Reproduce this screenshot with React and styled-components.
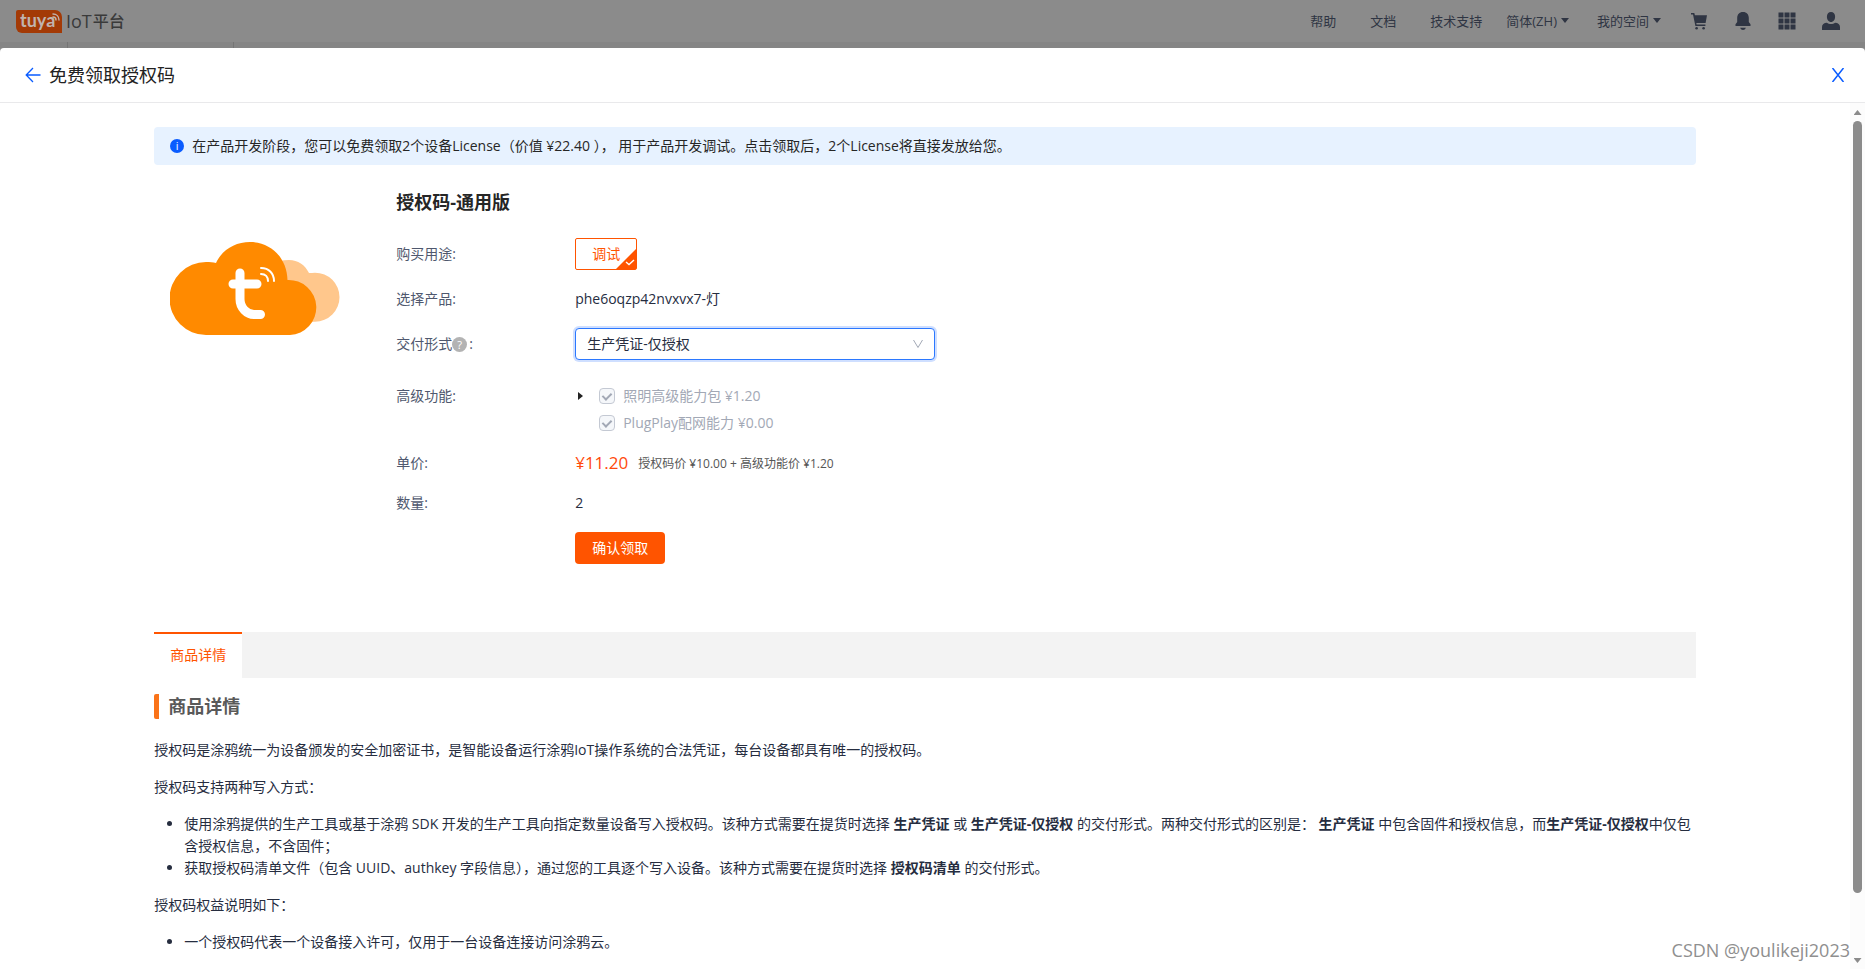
import React, { useState } from "react";
import styled, { createGlobalStyle, css } from "styled-components";

const GlobalStyle = createGlobalStyle`
  * {
    box-sizing: border-box;
  }
  html,
  body,
  #root {
    height: 100%;
  }
  body {
    margin: 0;
    overflow: hidden;
    background: #8b8b8b;
    color: #262d3f;
    font-family: "Open Sans", "Noto Sans CJK SC", sans-serif;
    font-size: 14px;
    line-height: 22px;
  }
  button,
  select,
  input {
    font: inherit;
  }
`;

const navLinks = ["帮助", "文档", "技术支持"];
const navMenus = ["简体(ZH)", "我的空间"];

const features = [
  { id: "light", name: "照明高级能力包", price: "¥1.20", expandable: true },
  { id: "plug", name: "PlugPlay配网能力", price: "¥0.00" },
];

const deliveryTypes = ["生产凭证-仅授权", "生产凭证", "授权码清单"];

function BrandLogo() {
  return (
    <Brand href="#home">
      <BrandMark>
        tuya
        <svg width="8" height="8" viewBox="0 0 8 8" fill="none" stroke="currentColor" strokeLinecap="round">
          <path strokeWidth="1.4" d="M1 1c3.5 0 6 2.5 6 6" />
          <path strokeWidth="1.4" d="M1 4c1.8 0 3 1.2 3 3" />
        </svg>
      </BrandMark>
      <BrandName>
        <span>IoT</span>平台
      </BrandName>
    </Brand>
  );
}

function TopIcons() {
  return (
    <IconGroup>
      <IconButton aria-label="购物车">
        <svg width="18" height="18" viewBox="0 0 18 18" fill="currentColor">
          <path d="M1 1h3.3l.6 2.3H17l-1.4 7.8H6.3l.3 1.4h8.8V14H5.4L3 2.5H1z" />
          <circle cx="6.6" cy="16.2" r="1.3" />
          <circle cx="13.6" cy="16.2" r="1.3" />
        </svg>
      </IconButton>
      <IconButton aria-label="消息">
        <svg width="18" height="18" viewBox="0 0 18 18" fill="currentColor">
          <path d="M9 0c3.8 0 5.8 2.6 5.8 6v4l1.7 2.2V14h-15v-1.800L3.200 10V6C3.200 2.600 5.200 0 9 0z" />
          <path d="M6.200 15.800h5.600C11.300 17.300 10.300 18 9 18s-2.300-.7-2.800-2.200z" />
        </svg>
      </IconButton>
      <IconButton aria-label="应用">
        <svg width="18" height="18" viewBox="0 0 18 18" fill="currentColor">
          {[0, 6, 12].map((y) =>
            [0, 6, 12].map((x) => <rect key={`${x}-${y}`} x={x + 0.5} y={y + 0.5} width="5" height="5" />)
          )}
        </svg>
      </IconButton>
      <IconButton aria-label="账号">
        <svg width="18" height="18" viewBox="0 0 18 18" fill="currentColor">
          <path d="M9 0c2.500 0 4.100 1.900 4.100 4.700S11.400 10 9 10 4.900 7.500 4.900 4.700 6.500 0 9 0z" />
          <path d="M0 18v-3c0-2.600 2-4.300 4.900-4.300 1 .8 2.500 1.300 4.100 1.300s3.100-.5 4.100-1.300c2.900 0 4.900 1.700 4.900 4.300v3z" />
        </svg>
      </IconButton>
    </IconGroup>
  );
}

function CloudImage() {
  return (
    <svg width="170" height="93" viewBox="0 0 170 93" role="img" aria-label="授权码">
      <path
        fill="#ffc78c"
        d="M100 80V22c6-3 13-4 19-4 9 0 16 5 20 13 2 0 4-.3 6-.3a24.500 24.500 0 1 1 0 49z"
      />
      <path
        fill="#ff8a00"
        d="M36 93a36.500 36.500 0 0 1 0-73c4 0 7 .2 10 1C52 8 65 0 80 0c21 0 37 16 37.500 38A27.500 27.500 0 1 1 120 93z"
      />
      <g fill="none" stroke="#fff" strokeLinecap="round">
        <path strokeWidth="9" d="M70 31v26c0 9 7 15.500 14 15.500h6.500M63 42h24" />
        <path strokeWidth="2" d="M91 26c8 0 13 5.500 13 13M91 32c4.500 0 7 3 7 7" />
      </g>
    </svg>
  );
}

export default function App() {
  const [delivery, setDelivery] = useState(deliveryTypes[0]);

  return (
    <Page>
      <GlobalStyle />
      <TopBar>
        <BrandLogo />
        <Nav>
          {navLinks.map((item) => (
            <NavLink key={item} href="#nav">
              {item}
            </NavLink>
          ))}
          {navMenus.map((item) => (
            <NavMenu key={item}>
              {item}
              <Caret />
            </NavMenu>
          ))}
          <TopIcons />
        </Nav>
      </TopBar>
      <Backdrop>
        <SideTab />
        <SubTab />
      </Backdrop>

      <Modal role="dialog" aria-labelledby="modal-title">
        <ModalHeader>
          <BackButton aria-label="返回">
            <svg width="16" height="16" viewBox="0 0 16 16" fill="none" stroke="currentColor" strokeWidth="1.3">
              <path d="M15.5 8H1.5M8 1 1.2 8 8 15" />
            </svg>
          </BackButton>
          <ModalTitle id="modal-title">免费领取授权码</ModalTitle>
          <CloseButton aria-label="关闭">
            <svg width="14" height="14" viewBox="0 0 14 14" fill="none" stroke="currentColor" strokeWidth="1.5">
              <path d="M1.500 0l11 14M12.500 0l-11 14" />
            </svg>
          </CloseButton>
        </ModalHeader>

        <ModalBody>
          <ScrollArea>
            <Content>
              <Notice>
                <InfoIcon>i</InfoIcon>
                在产品开发阶段，您可以免费领取2个设备License（价值 ¥22.40 ）， 用于产品开发调试。点击领取后，2个License将直接发放给您。
              </Notice>

              <Product>
                <ProductImage>
                  <CloudImage />
                </ProductImage>
                <ProductInfo>
                  <ProductName>授权码-通用版</ProductName>
                  <Field $height={32} $gap={18}>
                    <Label>购买用途:</Label>
                    <Tag aria-pressed="true">
                      调试
                      <TagCheck width="20" height="20" viewBox="0 0 20 20">
                        <path d="M20 0v20H0z" fill="#ff5400" />
                        <path d="M10 13l3 2.500 5-4.500" fill="none" stroke="#fff" strokeWidth="1.4" />
                      </TagCheck>
                    </Tag>
                  </Field>
                  <Field $height={22} $gap={18}>
                    <Label>选择产品:</Label>
                    <span>phe6oqzp42nvxvx7-灯</span>
                  </Field>
                  <Field $height={32} $gap={25}>
                    <Label as="label" htmlFor="delivery">
                      交付形式<HelpIcon>?</HelpIcon>:
                    </Label>
                    <SelectBox>
                      <Select id="delivery" value={delivery} onChange={(e) => setDelivery(e.target.value)}>
                        {deliveryTypes.map((type) => (
                          <option key={type}>{type}</option>
                        ))}
                      </Select>
                      <svg width="10" height="10" viewBox="0 0 10 10" fill="none" stroke="#a2a8b5">
                        <path d="M0.5 1L5 8.500 9.500 1" />
                      </svg>
                    </SelectBox>
                  </Field>
                  <Field $gap={17}>
                    <Label>高级功能:</Label>
                    <FeatureList>
                      {features.map((feature) => (
                        <Feature key={feature.id}>
                          <Toggle $visible={feature.expandable} aria-label="展开" />
                          <Checkbox type="checkbox" id={feature.id} defaultChecked disabled />
                          <label htmlFor={feature.id}>
                            {feature.name} {feature.price}
                          </label>
                        </Feature>
                      ))}
                    </FeatureList>
                  </Field>
                  <Field $height={22} $gap={17}>
                    <Label>单价:</Label>
                    <Price>¥11.20</Price>
                    <PriceNote>授权码价 ¥10.00 + 高级功能价 ¥1.20</PriceNote>
                  </Field>
                  <Field $height={22} $gap={18}>
                    <Label>数量:</Label>
                    <span>2</span>
                  </Field>
                  <Field $height={32}>
                    <Label />
                    <Submit>确认领取</Submit>
                  </Field>
                </ProductInfo>
              </Product>

              <Tabs role="tablist">
                <Tab role="tab" aria-selected="true">
                  商品详情
                </Tab>
              </Tabs>

              <Details>
                <DetailsTitle>商品详情</DetailsTitle>
                <p>授权码是涂鸦统一为设备颁发的安全加密证书，是智能设备运行涂鸦IoT操作系统的合法凭证，每台设备都具有唯一的授权码。</p>
                <p>授权码支持两种写入方式：</p>
                <ul>
                  <li>
                    使用涂鸦提供的生产工具或基于涂鸦 SDK 开发的生产工具向指定数量设备写入授权码。该种方式需要在提货时选择{" "}
                    <b>生产凭证</b> 或 <b>生产凭证-仅授权</b> 的交付形式。两种交付形式的区别是： <b>生产凭证</b>{" "}
                    中包含固件和授权信息，而<b>生产凭证-仅授权</b>中仅包含授权信息，不含固件；
                  </li>
                  <li>
                    获取授权码清单文件（包含 UUID、authkey 字段信息），通过您的工具逐个写入设备。该种方式需要在提货时选择{" "}
                    <b>授权码清单</b> 的交付形式。
                  </li>
                </ul>
                <p>授权码权益说明如下：</p>
                <ul>
                  <li>一个授权码代表一个设备接入许可，仅用于一台设备连接访问涂鸦云。</li>
                </ul>
              </Details>
            </Content>
          </ScrollArea>
          <Scrollbar aria-hidden="true">
            <ScrollArrow $up />
            <ScrollTrack>
              <ScrollThumb />
            </ScrollTrack>
            <ScrollArrow />
          </Scrollbar>
        </ModalBody>
      </Modal>
      <Watermark>CSDN @youlikeji2023</Watermark>
    </Page>
  );
}

const Page = styled.div`
  position: relative;
  display: flex;
  flex-direction: column;
  height: 100vh;
  overflow: hidden;
`;

const TopBar = styled.header`
  display: flex;
  justify-content: space-between;
  align-items: center;
  flex: none;
  height: 42px;
  padding: 0 25px 0 16px;
  background: #8b8b8b;
`;

const Brand = styled.a`
  display: flex;
  align-items: center;
  gap: 4px;
  color: #3a3a3a;
  text-decoration: none;
`;

const BrandMark = styled.span`
  position: relative;
  width: 46px;
  height: 23px;
  padding-left: 4px;
  border-radius: 2px 7px 0 6px;
  background: #a33a06;
  color: #c0b4ae;
  font-family: Lato, sans-serif;
  font-size: 18px;
  font-weight: 700;
  line-height: 20px;
  svg {
    position: absolute;
    top: 3px;
    right: 2px;
  }
`;

const BrandName = styled.span`
  display: flex;
  align-items: center;
  gap: 1px;
  font-size: 16px;
  font-weight: 500;
  span {
    font-size: 18px;
  }
`;

const Nav = styled.nav`
  display: flex;
  align-items: center;
  color: #2f3543;
  font-size: 13px;
`;

const NavLink = styled.a`
  margin-right: 34px;
  color: inherit;
  text-decoration: none;
  &:nth-of-type(3) {
    margin-right: 24px;
  }
`;

const NavMenu = styled.button`
  display: flex;
  align-items: center;
  gap: 4px;
  margin-right: 28px;
  padding: 0;
  border: 0;
  background: none;
  color: inherit;
`;

const Caret = styled.i`
  margin-bottom: 2px;
  border: 4px solid transparent;
  border-top: 5px solid currentColor;
  border-bottom: 0;
`;

const IconGroup = styled.div`
  display: flex;
  gap: 26px;
  margin-left: 1px;
`;

const IconButton = styled.button`
  display: flex;
  padding: 0;
  border: 0;
  background: none;
  color: #2f3543;
`;

const Backdrop = styled.div`
  display: flex;
  flex: none;
  height: 6px;
  background: #858585;
`;

const SideTab = styled.div`
  width: 68px;
  border-right: 1px solid #757575;
`;

const SubTab = styled.div`
  width: 166px;
  border-right: 1px solid #757575;
`;

const Modal = styled.section`
  display: flex;
  flex-direction: column;
  flex: 1;
  min-height: 0;
  border-radius: 4px 4px 0 0;
  background: #fff;
`;

const ModalHeader = styled.header`
  display: flex;
  align-items: center;
  flex: none;
  height: 55px;
  padding: 0 20px 0 25px;
  border-bottom: 1px solid #e9e9eb;
`;

const plainButton = css`
  display: flex;
  padding: 0;
  border: 0;
  background: none;
  color: #0a5cff;
`;

const BackButton = styled.button`
  ${plainButton}
`;

const CloseButton = styled.button`
  ${plainButton}
  margin-left: auto;
`;

const ModalTitle = styled.h1`
  margin: 0 0 0 8px;
  color: #222;
  font-size: 18px;
  font-weight: 400;
`;

const ModalBody = styled.div`
  display: flex;
  flex: 1;
  min-height: 0;
`;

const ScrollArea = styled.div`
  flex: 1;
  min-width: 0;
  overflow: hidden;
`;

const Content = styled.main`
  width: calc(100% * 10 / 12);
  margin: 0 auto;
  padding-top: 24px;
`;

const Notice = styled.div`
  display: flex;
  align-items: center;
  gap: 8px;
  padding: 8px 16px;
  border-radius: 4px;
  background: #e7f2ff;
  color: #262626;
`;

const InfoIcon = styled.i`
  width: 14px;
  height: 14px;
  border-radius: 50%;
  background: #0a5cff;
  color: #fff;
  font-size: 11px;
  font-style: normal;
  line-height: 14px;
  text-align: center;
`;

const Product = styled.section`
  display: flex;
`;

const ProductImage = styled.div`
  flex: none;
  width: 242px;
  padding: 77px 0 0 16px;
`;

const ProductInfo = styled.div`
  flex: 1;
  padding: 25px 0 68px;
`;

const ProductName = styled.h2`
  margin: 0 0 24px;
  color: #262626;
  font-size: 18px;
  font-weight: 700;
  line-height: 24px;
`;

const Field = styled.div`
  display: flex;
  align-items: ${(props) => (props.$height ? "center" : "flex-start")};
  min-height: ${(props) => props.$height || 22}px;
  margin-bottom: ${(props) => props.$gap || 0}px;
`;

const Label = styled.span`
  display: flex;
  flex: none;
  align-items: center;
  width: 179px;
  color: #4f586e;
`;

const HelpIcon = styled.i`
  width: 15px;
  height: 15px;
  margin-right: 2px;
  border-radius: 50%;
  background: #b3b3b3;
  color: #fff;
  font-size: 11px;
  font-style: normal;
  line-height: 15px;
  text-align: center;
`;

const Tag = styled.button`
  position: relative;
  width: 62px;
  height: 32px;
  padding: 0;
  border: 1px solid #ff5400;
  border-radius: 2px;
  background: #fff;
  color: #ff5400;
`;

const TagCheck = styled.svg`
  position: absolute;
  right: 0;
  bottom: 0;
`;

const SelectBox = styled.div`
  position: relative;
  width: 360px;
  svg {
    position: absolute;
    top: 11px;
    right: 12px;
    pointer-events: none;
  }
`;

const Select = styled.select`
  display: block;
  width: 100%;
  height: 32px;
  padding: 0 11px;
  border: 1px solid #2b78ff;
  border-radius: 4px;
  outline: 0;
  background: #fff;
  box-shadow: 0 0 0 2px #cfdfff;
  color: #262d3f;
  appearance: none;
`;

const FeatureList = styled.div`
  display: flex;
  flex-direction: column;
  gap: 5px;
`;

const Feature = styled.div`
  display: flex;
  align-items: center;
  color: #a2a8b5;
`;

const Toggle = styled.button`
  width: 5px;
  height: 8px;
  margin: 0 16px 0 3px;
  padding: 0;
  border: 0;
  border-left: 5px solid #222;
  border-top: 4px solid transparent;
  border-bottom: 4px solid transparent;
  background: none;
  visibility: ${(props) => (props.$visible ? "visible" : "hidden")};
`;

const Checkbox = styled.input`
  position: relative;
  width: 16px;
  height: 16px;
  margin: 0 8px 0 0;
  border: 1px solid #c4c9d3;
  border-radius: 4px;
  background: #f5f7fa;
  appearance: none;
  &:checked::after {
    content: "";
    position: absolute;
    top: 2px;
    left: 4px;
    box-sizing: border-box;
    width: 6px;
    height: 9px;
    border: solid #a2a8b5;
    border-width: 0 2px 2px 0;
    transform: rotate(45deg);
  }
`;

const Price = styled.strong`
  color: #ff4a0a;
  font-size: 17px;
  font-weight: 400;
`;

const PriceNote = styled.span`
  margin-left: 10px;
  padding-top: 2px;
  color: #555;
  font-size: 12px;
`;

const Submit = styled.button`
  height: 32px;
  padding: 0 17px;
  border: 0;
  border-radius: 4px;
  background: #ff5400;
  color: #fff;
`;

const Tabs = styled.div`
  display: flex;
  height: 46px;
  background: #f3f3f3;
`;

const Tab = styled.button`
  padding: 0 16px 2px;
  border: 0;
  border-top: 2px solid #ff5400;
  background: #fff;
  color: #ff5400;
`;

const Details = styled.article`
  p,
  ul {
    margin: 0 0 15px;
  }
  ul {
    padding-left: 30px;
  }
`;

const DetailsTitle = styled.h2`
  margin: 16px 0 20px;
  padding-left: 9px;
  border-left: 5px solid #fa7319;
  border-radius: 2px;
  color: #595959;
  font-size: 18px;
  font-weight: 700;
  line-height: 25px;
`;

const Scrollbar = styled.div`
  display: flex;
  flex-direction: column;
  align-items: center;
  flex: none;
  width: 15px;
  background: #fcfcfc;
`;

const ScrollArrow = styled.i`
  width: 8px;
  height: 5px;
  margin: 7px 0 6px;
  background: #8b8b8b;
  clip-path: ${(props) => (props.$up ? "polygon(50% 0, 100% 100%, 0 100%)" : "polygon(0 0, 100% 0, 50% 100%)")};
`;

const ScrollTrack = styled.div`
  flex: 1;
  width: 9px;
`;

const ScrollThumb = styled.div`
  height: 93%;
  border-radius: 5px;
  background: #8b8b8b;
`;

const Watermark = styled.div`
  position: absolute;
  right: 15px;
  bottom: 7px;
  color: #8f8f8f;
  font-size: 18px;
  line-height: 24px;
`;
